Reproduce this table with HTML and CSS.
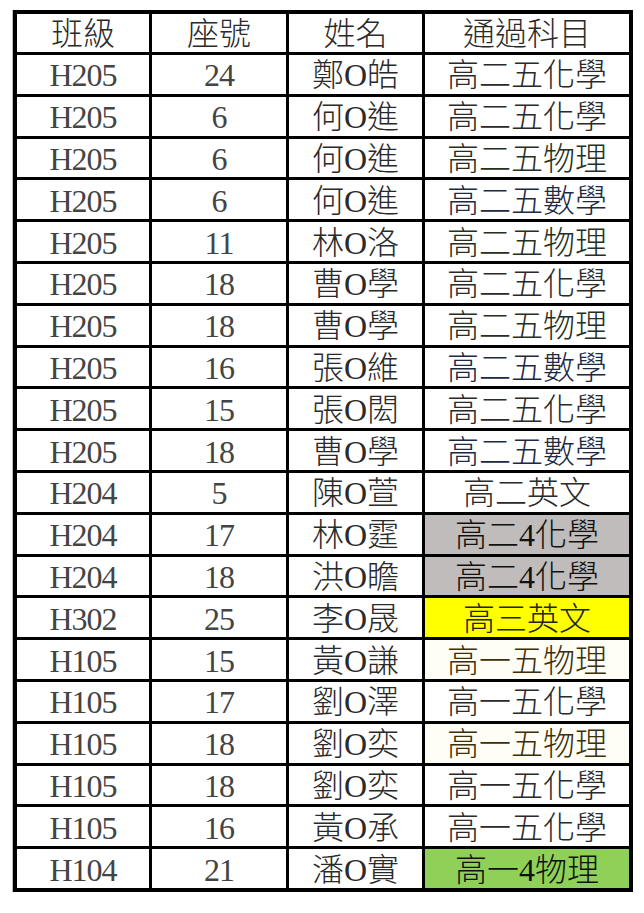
FILE: index.html
```html
<!DOCTYPE html>
<html lang="zh-Hant">
<head>
<meta charset="utf-8">
<title>通過科目</title>
<link rel="stylesheet" href="styles.css">
</head>
<body>
<div class="page">
<table class="grid">
<thead>
<tr><th>班級</th><th>座號</th><th>姓名</th><th class="subj">通過科目</th></tr>
</thead>
<tbody>
<tr><td>H205</td><td>24</td><td>鄭O皓</td><td class="subj">高二五化學</td></tr>
<tr><td>H205</td><td>6</td><td>何O進</td><td class="subj">高二五化學</td></tr>
<tr><td>H205</td><td>6</td><td>何O進</td><td class="subj phys">高二五物理</td></tr>
<tr><td>H205</td><td>6</td><td>何O進</td><td class="subj math">高二五數學</td></tr>
<tr><td>H205</td><td>11</td><td>林O洛</td><td class="subj phys">高二五物理</td></tr>
<tr><td>H205</td><td>18</td><td>曹O學</td><td class="subj">高二五化學</td></tr>
<tr><td>H205</td><td>18</td><td>曹O學</td><td class="subj phys">高二五物理</td></tr>
<tr><td>H205</td><td>16</td><td>張O維</td><td class="subj math">高二五數學</td></tr>
<tr><td>H205</td><td>15</td><td>張O閎</td><td class="subj">高二五化學</td></tr>
<tr><td>H205</td><td>18</td><td>曹O學</td><td class="subj math">高二五數學</td></tr>
<tr><td>H204</td><td>5</td><td>陳O萱</td><td class="subj">高二英文</td></tr>
<tr><td>H204</td><td>17</td><td>林O霆</td><td class="subj gray">高二4化學</td></tr>
<tr><td>H204</td><td>18</td><td>洪O瞻</td><td class="subj gray">高二4化學</td></tr>
<tr><td>H302</td><td>25</td><td>李O晟</td><td class="subj yellow">高三英文</td></tr>
<tr><td>H105</td><td>15</td><td>黃O謙</td><td class="subj olive">高一五物理</td></tr>
<tr><td>H105</td><td>17</td><td>劉O澤</td><td class="subj">高一五化學</td></tr>
<tr><td>H105</td><td>18</td><td>劉O奕</td><td class="subj olive">高一五物理</td></tr>
<tr><td>H105</td><td>18</td><td>劉O奕</td><td class="subj">高一五化學</td></tr>
<tr><td>H105</td><td>16</td><td>黃O承</td><td class="subj">高一五化學</td></tr>
<tr class="last"><td>H104</td><td>21</td><td>潘O實</td><td class="subj green">高一4物理</td></tr>
</tbody>
</table>
</div>
</body>
</html>
```
FILE: styles.css
```css
html, body {
  margin: 0;
  padding: 0;
  background: #ffffff;
}

.page {
  padding: 10px 0 0 13px;
}

.grid {
  border-collapse: separate;
  border-spacing: 0;
  border-top: 4px solid #000;
  border-left: 4px solid #000;
  box-shadow: -1px 0 0 #bdbdbd;
  font-family: "Liberation Serif", "Noto Sans CJK TC", serif;
  font-size: 32px;
  font-weight: 300;
  color: #2a2a2a;
}

.grid th,
.grid td {
  border-right: 3px solid #000;
  border-bottom: 3px solid #000;
  padding: 2px 0 0 0;
  box-sizing: content-box;
  text-align: center;
  vertical-align: middle;
  line-height: 36px;
  font-weight: 300;
  white-space: nowrap;
}

.grid th { height: 36px; }
.grid td { height: 36.8px; }

.grid td:nth-child(1),
.grid td:nth-child(2) {
  letter-spacing: -1px;
  color: #444;
}

.grid th:nth-child(1), .grid td:nth-child(1) { width: 132px; }
.grid th:nth-child(2), .grid td:nth-child(2) { width: 134px; }
.grid th:nth-child(3), .grid td:nth-child(3) { width: 133px; }
.grid th.subj, .grid td.subj {
  width: 204px;
  border-right-width: 4px;
}

.grid tr.last td { border-bottom-width: 4px; }

.phys { color: #26301c; }
.math { color: #1c2a44; }
.olive { color: #3d3008; background: #fffef6; }
.gray { background: #c0bcbc; color: #111; }
.yellow { background: #ffff00; color: #222; }
.green { background: #8fd158; color: #111; }
```
